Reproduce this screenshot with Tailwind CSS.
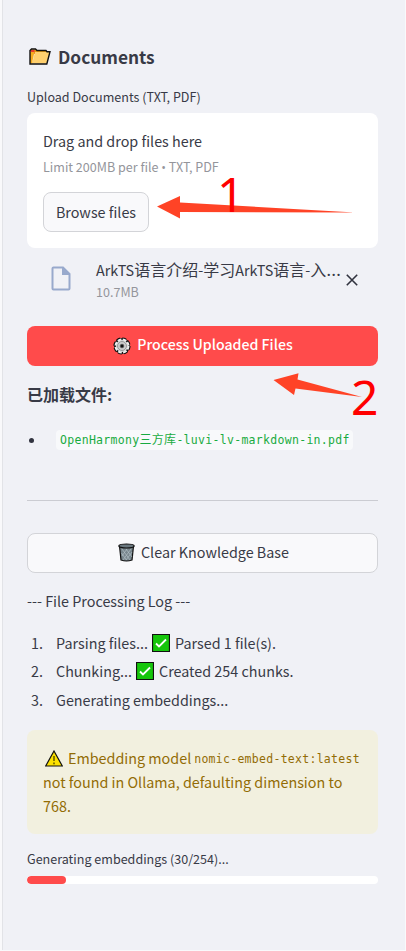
<!DOCTYPE html>
<html lang="en">
<head>
<meta charset="utf-8">
<title>Documents</title>
<script src="https://cdn.jsdelivr.net/npm/@tailwindcss/browser@4"></script>
</head>
<body class="bg-white">
<aside class="relative h-[951px] w-[406px] overflow-hidden bg-[#f9f9fb] pl-[2px] font-['Noto_Sans_CJK_SC',sans-serif] text-[14.350px] text-[#383a46]">
<div class="flex h-[950px] w-[403px] flex-col border-l border-[#e2e3e7] bg-[#f0f1f6] pr-[27px] pl-6">
  <h1 class="mt-[39px] flex h-9 items-center gap-[7px] text-[17.300px] font-semibold whitespace-nowrap">
    <svg class="ml-[2px] h-[18px] w-[22px]" viewBox="0 0 22 18"><path d="M1 1.500h6l2 1.500h9v3H3z" fill="#e69b10"/><path d="M1.500 2h4v4h-4z" fill="#e53b2c"/><path d="M1 2v13.500h16.500L21 4H6L3.500 14" fill="#ffd06e"/><path d="M1 15.500V4h4.500L3 15z" fill="#f5ab1f"/><path d="M1 16V2.500L2.500 1h4L8 2.500h9l1 1.200h3L17.800 16z" fill="none" stroke="#111" stroke-width="1.400"/></svg>
    <span class="-mt-px">Documents</span>
  </h1>
  <p class="mt-[12px] h-5 text-[12.550px] leading-5">Upload Documents (TXT, PDF)</p>
  <section class="mt-[6px] h-[135px] rounded-lg bg-white px-4 pt-[16px]">
    <p class="h-6 leading-6">Drag and drop files here</p>
    <p class="mt-[4px] h-5 text-[12.550px] leading-5 text-[#94959b]">Limit 200MB per file <span class="font-['Open_Sans',sans-serif]">•</span> TXT, PDF</p>
    <button class="mt-[15px] flex h-10 w-[106px] items-center justify-center rounded-lg border border-[#d3d4d8] bg-[#f9f9fb] whitespace-nowrap">Browse files</button>
  </section>
  <div class="mt-2 flex h-[54px] items-start">
    <svg class="mt-[10px] ml-6 h-[25px] w-5" viewBox="0 0 20 25"><path d="M2.500 1.500H12L18.500 8V22.500Q18.500 23.500 17.500 23.500H2.500Q1.500 23.500 1.500 22.500V2.500Q1.500 1.500 2.500 1.500Z" fill="none" stroke="#98a9cc" stroke-width="2"/><path d="M11 1.500V9h8z" fill="#98a9cc"/></svg>
    <div class="ml-[25px] w-[248px] whitespace-nowrap">
      <p class="mt-px h-6 leading-6">ArkTS<span class="text-[16px]">语言介绍</span>-<span class="text-[16px]">学习</span>ArkTS<span class="text-[16px]">语言</span>-<span class="text-[16px]">入</span><span class="font-['Open_Sans',sans-serif] text-[19px] leading-none">…</span></p>
      <p class="mt-px h-5 text-[12.550px] leading-5 text-[#94959b]">10.7MB</p>
    </div>
    <svg class="mt-[18px] ml-[2px] h-3 w-3" viewBox="0 0 12 12"><path d="M.8.8l10.400 10.400M11.200.8L.8 11.200" stroke="#31333f" stroke-width="1.600"/></svg>
  </div>
  <button class="mt-4 flex h-10 items-center justify-center gap-[6px] rounded-lg bg-[#ff4b4b] pl-px text-white">
    <svg class="h-[18px] w-[18px]" viewBox="0 0 18 18"><circle cx="9" cy="9" r="7" fill="#ddd" stroke="#111" stroke-width="3.200" stroke-dasharray="3.700 1.800"/><circle cx="9" cy="9" r="7" fill="#ddd" stroke="#111" stroke-width="2"/><circle cx="9" cy="9" r="6.500" fill="none" stroke="#eee" stroke-width="2" stroke-dasharray="3.700 1.400"/><circle cx="9" cy="9" r="4.500" fill="#ccc" stroke="#888" stroke-width=".8"/><circle cx="9" cy="9" r="2" fill="#111" stroke="#888" stroke-width=".6"/></svg>
    <span class="-mt-[2px] text-[14.150px] font-medium">Process Uploaded Files</span>
  </button>
  <p class="mt-[16px] h-6 text-[16px] leading-6 font-bold">已加载文件:</p>
  <ul class="mt-[24px] flex h-5 items-center">
    <li class="flex items-center"><span class="ml-[2px] h-[5px] w-[5px] rounded-full bg-[#31333f]"></span><code class="ml-[22px] block h-5 w-[297px] rounded bg-[#f8f9fb] pl-[4px] font-['DejaVu_Sans_Mono','Noto_Sans_CJK_SC',monospace] text-[11.500px] leading-5 tracking-[0.300px] whitespace-nowrap text-[#18ab41]">OpenHarmony<span class="text-[12px]">三方库</span>-luvi-lv-markdown-in.pdf</code></li>
  </ul>
  <hr class="mt-[50px] border-[#cbccd2]">
  <button class="mt-8 flex h-10 items-center justify-center gap-[6px] rounded-lg border border-[#d3d4d8] bg-[#f9f9fb] pl-[2px]">
    <svg class="-mt-[2px] h-[19px] w-[17px]" viewBox="0 0 17 19"><path d="M1.500 3L3 17q5.500 2 11 0l1.500-14z" fill="#78868d" stroke="#111" stroke-width="1.200"/><path d="M4 6l8 11M8 6l6 8M3.500 10l5 7M13 6L5 17M9 6l-5 7M14 9l-6 8" stroke="#b1bec5" stroke-width=".7"/><ellipse cx="8.500" cy="3" rx="7.700" ry="2" fill="#69777e" stroke="#111" stroke-width="1.200"/></svg>
    <span class="-mt-[2px]">Clear Knowledge Base</span>
  </button>
  <p class="mt-[16px] h-6 leading-6">--- File Processing Log ---</p>
  <ol class="mt-[16px] ml-1 leading-[28px]">
    <li class="flex h-[28px] items-center"><span class="w-[25px]">1.</span><span>Parsing files...</span><svg class="mr-[5px] ml-[4px] h-[18px] w-[18px]" viewBox="0 0 18 18"><path d="M.5.5h17v17H.5z" fill="#16c60c" stroke="#111" stroke-width="1.200"/><path d="M4 9.500L7 12.500L14 5.500" fill="none" stroke="#fff" stroke-width="1.800"/></svg><span>Parsed 1 file(s).</span></li>
    <li class="flex h-[28px] items-center"><span class="w-[25px]">2.</span><span>Chunking...</span><svg class="mr-[5px] ml-[4px] h-[18px] w-[18px]" viewBox="0 0 18 18"><path d="M.5.5h17v17H.5z" fill="#16c60c" stroke="#111" stroke-width="1.200"/><path d="M4 9.500L7 12.500L14 5.500" fill="none" stroke="#fff" stroke-width="1.800"/></svg><span>Created 254 chunks.</span></li>
    <li class="flex h-[30px] items-center"><span class="w-[25px]">3.</span><span>Generating embeddings...</span></li>
  </ol>
  <div class="mt-[15px] h-[104px] rounded-lg bg-[#f2f0df] px-4 pt-4 leading-6 whitespace-nowrap text-[#926c05]">
    <p class="flex h-6 items-center"><svg class="ml-[2px] mr-[5px] h-[17px] w-[18px] shrink-0" viewBox="0 0 18 17"><path d="M9 1L17.300 16H.7z" fill="#fce100" stroke="#111" stroke-width="1.200"/><path d="M9 6v5M9 12.500v1.800" stroke="#6b6000" stroke-width="1.600"/></svg><span>Embedding model</span><code class="mt-[2px] ml-[3px] font-['DejaVu_Sans_Mono',monospace] text-[11.500px] tracking-[0.277px]">nomic-embed-text:latest</code></p>
    <p>not found in Ollama, defaulting dimension to</p>
    <p>768.</p>
  </div>
  <p class="mt-[15px] h-5 text-[12.550px] leading-5">Generating embeddings (30/254)...</p>
  <div class="mt-[7px] h-2 overflow-hidden rounded-full bg-white"><div class="h-2 w-[39px] rounded-full bg-[#ff4b4b]"></div></div>
</div>
<svg class="absolute top-0 left-0 h-[951px] w-[406px]" viewBox="0 0 406 951">
  <path d="M157 206.500L180 196V202.500L355 212.500L180 212V218.500z" fill="#ff4326"/>
  <path d="M273.500 380L298.500 373.200L297.500 379.500L362 397L295.500 388.500L294 395z" fill="#ff4326"/>
</svg>
<span class="absolute top-[166px] left-[217px] font-['Noto_Sans',sans-serif] text-[48px] leading-[56px] text-[#ff0000]">1</span>
<span class="absolute top-[369px] left-[351px] font-['Noto_Sans',sans-serif] text-[48px] leading-[56px] text-[#ff0000]">2</span>
</aside>
</body>
</html>
